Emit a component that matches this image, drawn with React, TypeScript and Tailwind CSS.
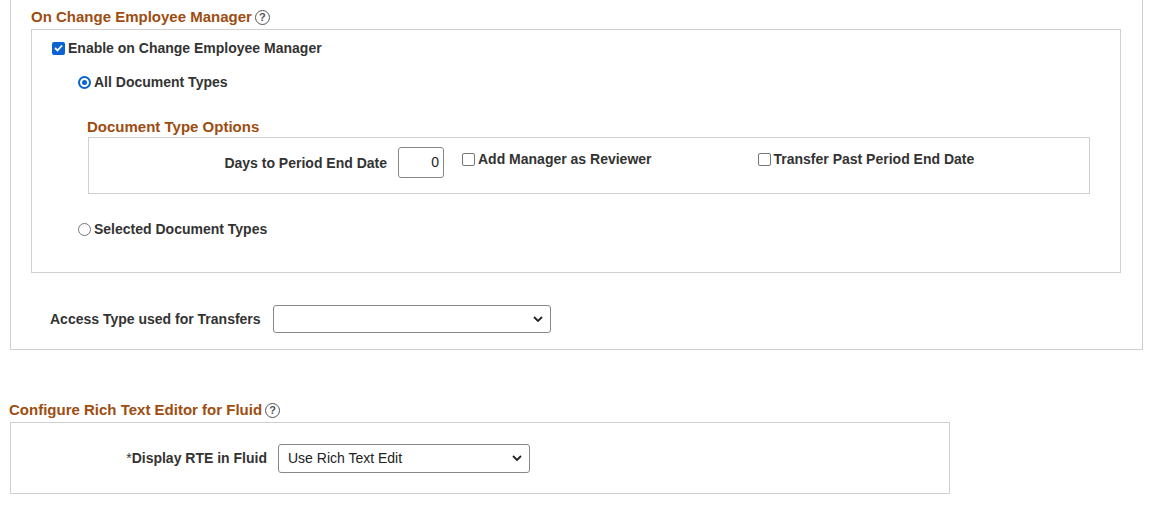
import React from 'react';

const Help = () => (
  <span className="inline-flex items-center justify-center w-[15px] h-[15px] rounded-full border border-[#555] text-[11px] font-bold text-[#555] ml-[3px] leading-none">?</span>
);

const Chevron = () => (
  <svg width="10" height="6" viewBox="0 0 10 6" className="absolute right-[7px] top-1/2 -translate-y-1/2">
    <path d="M1 1l4 4 4-4" fill="none" stroke="#222" strokeWidth="1.8" />
  </svg>
);

const Box = () => <span className="inline-block w-[13px] h-[13px] border border-[#767676] rounded-[2px] bg-white mr-[3px]" />;

const Radio = ({ on }: { on?: boolean }) => (
  <span className={`inline-flex items-center justify-center w-[13px] h-[13px] rounded-full border mr-[3px] ${on ? 'border-[#0b63d1] border-2' : 'border-[#767676]'}`}>
    {on && <span className="w-[5px] h-[5px] rounded-full bg-[#0b63d1]" />}
  </span>
);

export default function App() {
  return (
    <div className="w-[1150px] h-[506px] bg-white text-[#333] text-[14px] font-bold overflow-hidden" style={{ fontFamily: '"Liberation Sans", Arial, sans-serif' }}>
      <div className="ml-[10px] w-[1133px] h-[350px] border-x border-b border-[#d0d0d0] pt-[7px]">
        <div className="ml-[20px] flex items-center text-[15px] text-[#9e4d10] h-[20px]">On Change Employee Manager<Help /></div>
        <div className="ml-[20px] mt-[2px] w-[1090px] h-[244px] border border-[#d0d0d0] pt-[9px]">
          <div className="ml-[20px] flex items-center h-[18px]">
            <span className="inline-flex items-center justify-center w-[13px] h-[13px] rounded-[2px] bg-[#0b63d1] mr-[3px]">
              <svg width="9" height="8" viewBox="0 0 9 8"><path d="M1 4l2.5 2.5L8 1.5" fill="none" stroke="#fff" strokeWidth="1.8" /></svg>
            </span>
            Enable on Change Employee Manager
          </div>
          <div className="ml-[46px] mt-[16px] flex items-center h-[18px]"><Radio on />All Document Types</div>
          <div className="ml-[55px] mt-[25px] text-[15px] text-[#9e4d10] h-[18px]">Document Type Options</div>
          <div className="ml-[56px] mt-[3px] w-[1002px] h-[57px] border border-[#d0d0d0] flex items-start pt-[9px]">
            <span className="w-[298px] text-right mt-[6px]">Days to Period End Date</span>
            <span className="ml-[11px] w-[46px] h-[31px] border border-[#888] rounded-[3px] flex items-center justify-end pr-[4px] font-normal text-[#222]">0</span>
            <span className="ml-[18px] flex items-center h-[18px] mt-[3px]"><Box />Add Manager as Reviewer</span>
            <span className="ml-[106px] flex items-center h-[18px] mt-[3px]"><Box />Transfer Past Period End Date</span>
          </div>
          <div className="ml-[46px] mt-[26px] flex items-center h-[18px]"><Radio />Selected Document Types</div>
        </div>
        <div className="ml-[39px] mt-[32px] flex items-center">
          <span>Access Type used for Transfers</span>
          <span className="relative ml-[12px] w-[278px] h-[28px] border border-[#888] rounded-[3px] bg-white"><Chevron /></span>
        </div>
      </div>
      <div className="ml-[9px] mt-[50px] flex items-center text-[15px] text-[#9e4d10] h-[20px]">Configure Rich Text Editor for Fluid<Help /></div>
      <div className="ml-[10px] mt-[2px] w-[940px] h-[72px] border border-[#d0d0d0] flex items-center">
        <span className="w-[256px] text-right"><span className="font-normal">*</span>Display RTE in Fluid</span>
        <span className="relative ml-[11px] w-[252px] h-[29px] border border-[#888] rounded-[3px] bg-white flex items-center pl-[9px] font-normal text-[#222]">Use Rich Text Edit<Chevron /></span>
      </div>
    </div>
  );
}
